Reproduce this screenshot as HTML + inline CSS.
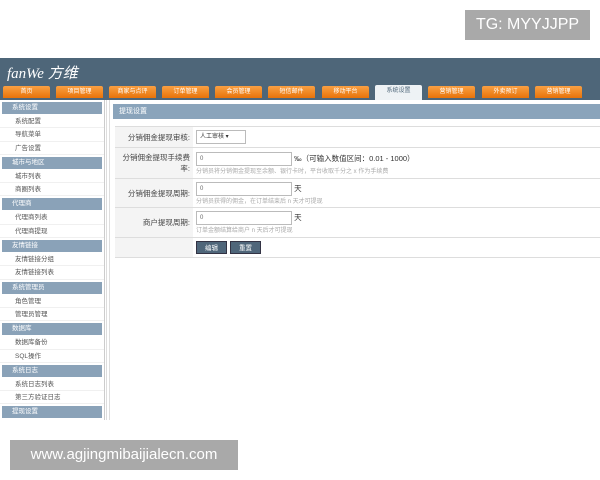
<!DOCTYPE html>
<html><head><meta charset="utf-8"><style>
*{margin:0;padding:0;box-sizing:border-box}
body{width:600px;height:480px;background:#fff;position:relative;overflow:hidden;font-family:"Liberation Sans","Noto Sans CJK SC",sans-serif;font-size:7px;color:#333}
.hdr{position:absolute;left:0;top:58px;width:600px;height:42px;background:#4e6679}
.logo{position:absolute;left:7px;top:62px;color:#fff;font-size:15px;font-style:italic;font-family:"Liberation Serif","Noto Sans CJK SC",serif}
.tab{position:absolute;top:86px;width:47px;height:12px;background:linear-gradient(#f9a043,#e8730a);border-radius:2px 2px 0 0;color:#fff;font-size:6px;text-align:center;line-height:12px}
.tab.a{background:#eef2f5;color:#4e6679;top:85px;height:15px}
.side{position:absolute;left:0;top:100px;width:105px;height:320px;background:#fff;border-right:1px solid #ccc;overflow:hidden}
.sh{height:12px;margin:2px 2px 1px;background:#8aa2b8;color:#fff;font-size:6.5px;line-height:12px;padding-left:10px}
.si{height:13.3px;line-height:13px;font-size:6.5px;padding-left:15px;color:#555;border-bottom:1px solid #f0f0f0}
.bar{position:absolute;left:106px;top:100px;width:4px;height:320px;border-left:1px solid #ddd;border-right:1px solid #ddd}
.title{position:absolute;left:113px;top:104px;width:487px;height:15px;background:#8aa4bb;color:#fff;font-size:7px;line-height:15px;padding-left:6px}
table{position:absolute;left:115px;top:126px;width:485px;border-collapse:collapse;border-top:1px solid #ddd}
td{border-bottom:1px solid #ddd;font-size:7.5px}
td.l{width:78px;background:#f4f4f4;text-align:right;padding-right:3px;color:#444}
td.v{padding-left:3px}
.in{display:inline-block;width:96px;height:14px;border:1px solid #bbb;font-size:6px;padding-left:3px;line-height:13px;vertical-align:middle;color:#666}
.h{color:#aaa;font-size:6px}
.btn{display:inline-block;background:#4f667a;color:#fff;font-size:6.5px;padding:0 8px;height:13px;line-height:13px;border:1px solid #334;margin-right:3px}
.wm{position:absolute;background:#a9a9a9;color:#fff;font-size:16px;line-height:30px;text-align:center}
</style></head><body>
<div class="hdr"></div>
<div class="logo">fanWe 方维</div>
<div class="tab" style="left:3px">首页</div>
<div class="tab" style="left:56px">项目管理</div>
<div class="tab" style="left:109px">商家与点评</div>
<div class="tab" style="left:162px">订单管理</div>
<div class="tab" style="left:215px">会员管理</div>
<div class="tab" style="left:268px">短信邮件</div>
<div class="tab" style="left:322px">移动平台</div>
<div class="tab a" style="left:375px">系统设置</div>
<div class="tab" style="left:428px">营销管理</div>
<div class="tab" style="left:482px">外卖预订</div>
<div class="tab" style="left:535px">营销管理</div>
<div class="side">
<div class="sh">系统设置</div><div class="si">系统配置</div><div class="si">导航菜单</div><div class="si">广告设置</div>
<div class="sh">城市与地区</div><div class="si">城市列表</div><div class="si">商圈列表</div>
<div class="sh">代理商</div><div class="si">代理商列表</div><div class="si">代理商提现</div>
<div class="sh">友情链接</div><div class="si">友情链接分组</div><div class="si">友情链接列表</div>
<div class="sh">系统管理员</div><div class="si">角色管理</div><div class="si">管理员管理</div>
<div class="sh">数据库</div><div class="si">数据库备份</div><div class="si">SQL操作</div>
<div class="sh">系统日志</div><div class="si">系统日志列表</div><div class="si">第三方验证日志</div>
<div class="sh">提现设置</div>
</div>
<div class="bar"></div>
<div class="title">提现设置</div>
<table>
<tr style="height:21px"><td class="l">分销佣金提现审核:</td><td class="v"><span class="in" style="width:50px;color:#333">人工审核 ▾</span></td></tr>
<tr style="height:31px"><td class="l">分销佣金提现手续费率:</td><td class="v"><span class="in">0</span> ‰（可输入数值区间：0.01 - 1000）<br><span class="h">分销员将分销佣金提现至余额、银行卡时，平台收取千分之 x 作为手续费</span></td></tr>
<tr style="height:29px"><td class="l">分销佣金提现周期:</td><td class="v"><span class="in">0</span> 天<br><span class="h">分销员获得的佣金，在订单结束后 n 天才可提现</span></td></tr>
<tr style="height:30px"><td class="l">商户提现周期:</td><td class="v"><span class="in">0</span> 天<br><span class="h">订单金额结算给商户 n 天后才可提现</span></td></tr>
<tr style="height:20px"><td class="l"></td><td class="v"><span class="btn">编辑</span><span class="btn">重置</span></td></tr>
</table>
<div class="wm" style="left:465px;top:10px;width:125px">TG: MYYJJPP</div>
<div class="wm" style="left:10px;top:440px;width:228px;font-size:15px">www.agjingmibaijialecn.com</div>
</body></html>
